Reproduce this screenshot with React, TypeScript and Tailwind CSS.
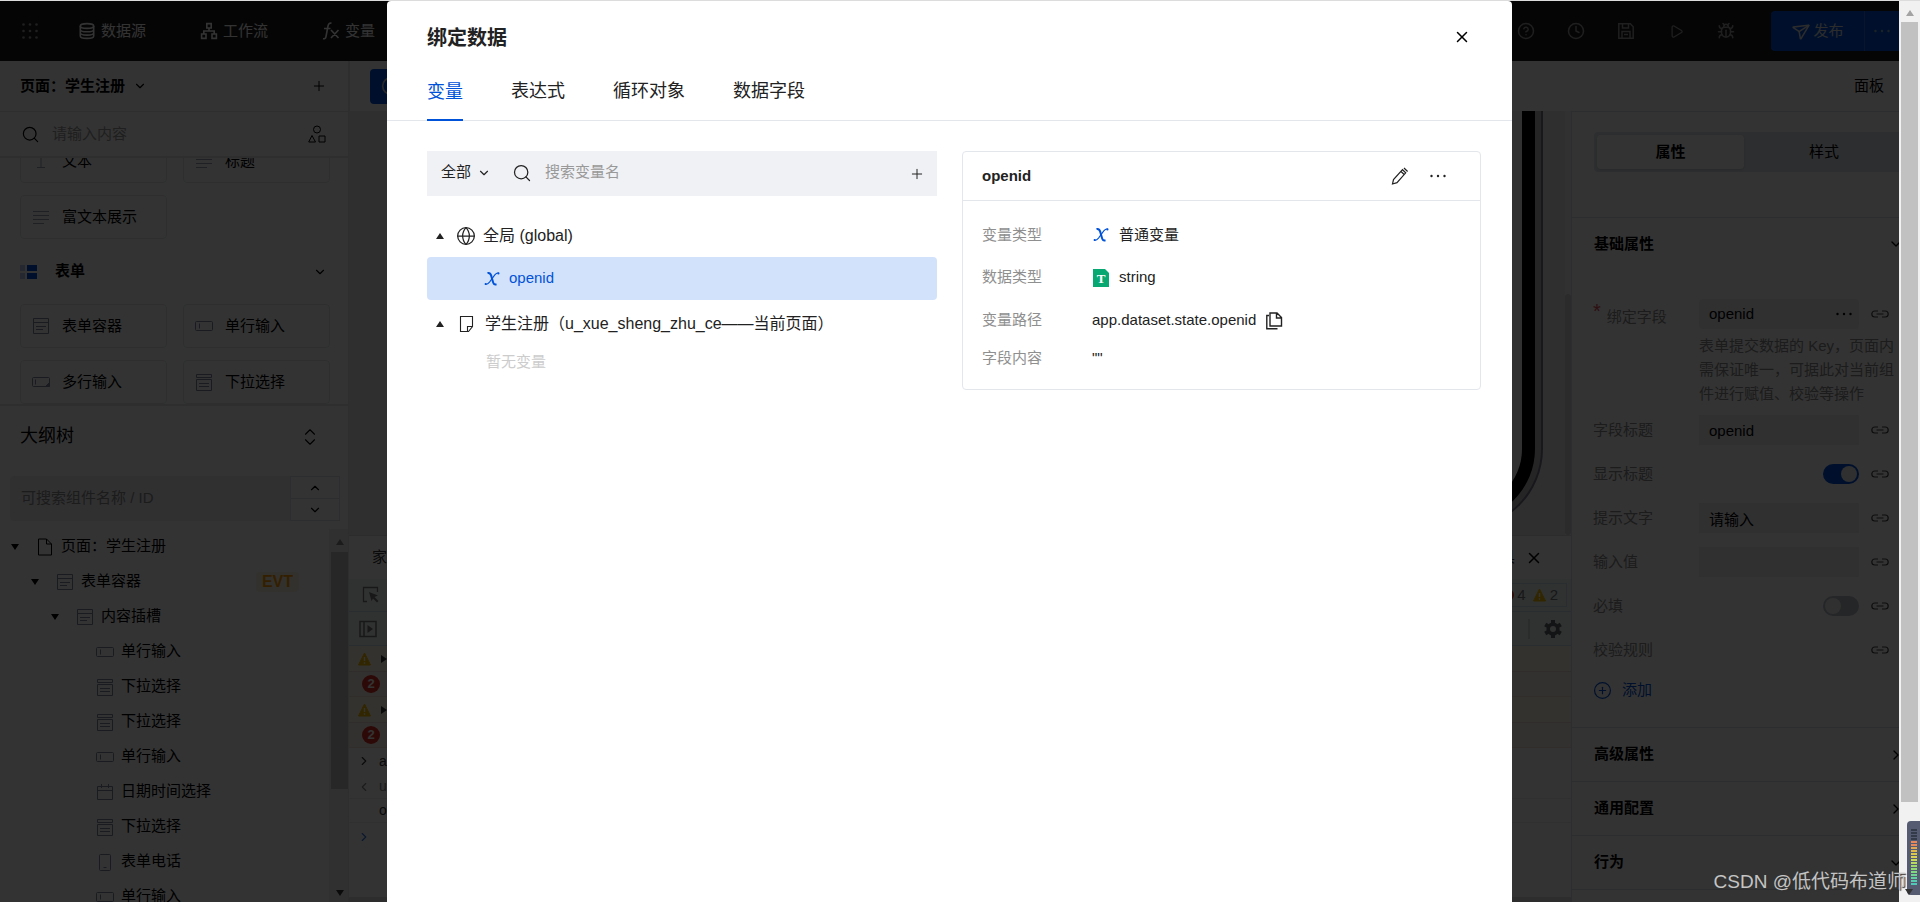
import { useState } from "react";
import type { ReactNode } from "react";
import { Bug, ChevronDown, ChevronRight, ChevronUp, CircleHelp, CirclePlus, Clock, Globe, Play, Plus, Search, Send, X } from "lucide-react";

type IconProps = { className?: string };

type TreeItem = { label: string; icon: (p: IconProps) => ReactNode; indent: string; open?: boolean; event?: boolean };

function Svg({ className = "", size = 18, children }: { className?: string; size?: number; children: ReactNode }) {
  return (
    <svg className={`shrink-0 ${className}`} width={size} height={size} viewBox="0 0 18 18" fill="none" stroke="currentColor" aria-hidden="true">
      {children}
    </svg>
  );
}

function AppsIcon() {
  return (
    <Svg className="text-[#999]">
      {[2.5, 9, 15.5].map((y) =>
        [2.5, 9, 15.5].map((x) => <circle key={`${x}-${y}`} cx={x} cy={y} r="1.3" fill="currentColor" stroke="none" />)
      )}
    </Svg>
  );
}

function DatabaseIcon() {
  return (
    <Svg>
      <ellipse cx="9" cy="4" rx="6.7" ry="2.4" strokeWidth="1.6" />
      <path d="M2.3 4v10c0 1.4 3 2.4 6.7 2.4s6.7-1 6.7-2.4V4M2.3 7.4c0 1.3 3 2.3 6.7 2.3s6.7-1 6.7-2.3M2.3 10.8c0 1.3 3 2.3 6.7 2.3s6.7-1 6.7-2.3" strokeWidth="1.6" />
    </Svg>
  );
}

function FlowIcon() {
  return (
    <Svg>
      <path d="M6.8 1.6h4.4V6H6.8zM1.6 12H6v4.4H1.6zM12 12h4.4v4.4H12zM9 6v3M3.8 12V9h10.4v3" strokeWidth="1.6" />
    </Svg>
  );
}

function FunctionIcon() {
  return (
    <Svg>
      <path d="M9.5 1.3C7.6.7 6.4 1.8 6 4L4 14.5c-.3 1.8-1.3 2.6-3 2.2M2 6.5h6.5M9 8l7.500 8M16.5 8 9 16" strokeWidth="1.6" />
    </Svg>
  );
}

function SaveIcon() {
  return (
    <Svg>
      <path d="M1.8 1.8h11.5l2.9 2.9v11.5H1.8zM5 16V9.5h8V16M5.5 2v4h6V2M7 12.5h4" strokeWidth="1.5" />
    </Svg>
  );
}

function ShapesIcon() {
  return (
    <Svg>
      <circle cx="9" cy="4.5" r="3.5" />
      <path d="M4 10.5 7.5 17H.7zM11 11h6v6h-6z" />
    </Svg>
  );
}

function LinesIcon() {
  return (
    <Svg className="text-[#9aa0b4]">
      <path d="M1 3.5h16M1 7.5h16M1 11.5h16M1 15.5h11" />
    </Svg>
  );
}

function TextIcon() {
  return (
    <Svg className="text-[#9aa0b4]">
      <path d="M3 2.5h12M9 2.5v13M5 15.5h8" />
    </Svg>
  );
}

function ContainerIcon() {
  return (
    <Svg className="text-[#8087a0]">
      <path d="M1.5 1.5h15v15h-15zM1.5 5.5h15M4 9.5h10M4 12.5h7" />
    </Svg>
  );
}

function InputIcon() {
  return (
    <Svg className="text-[#8087a0]">
      <rect x=".5" y="4.5" width="17" height="9" rx="1" />
      <path d="M4.5 6.5v5" />
    </Svg>
  );
}

function TextareaIcon() {
  return (
    <Svg className="text-[#8087a0]">
      <rect x=".5" y="4.5" width="17" height="9" rx="1" />
      <path d="M3.5 6.5v5" />
      <path d="M17.5 9.5v4h-4z" fill="currentColor" />
    </Svg>
  );
}

function SelectIcon() {
  return (
    <Svg className="text-[#8087a0]">
      <path d="M1.5 1.5h15v3h-15zM1.5 6.5h15v11h-15zM4 10.5h10M4 13.5h10" />
    </Svg>
  );
}

function CalendarIcon() {
  return (
    <Svg className="text-[#8087a0]">
      <path d="M1.5 3.5h15v13h-15zM1.5 7.5h15M5.5 1v4M12.5 1v4" />
    </Svg>
  );
}

function PhoneIcon() {
  return (
    <Svg className="text-[#8087a0]">
      <rect x="3.5" y="1.5" width="11" height="16" rx="1" />
      <path d="M7.5 14.5h3" />
    </Svg>
  );
}

function FileIcon() {
  return (
    <Svg>
      <path d="M2.5 1h8l5 5v11h-13zM10.5 1v5h5" />
    </Svg>
  );
}

function PageIcon() {
  return (
    <Svg className="text-[#222]">
      <path d="M3.5 1.5h12v10l-4 5h-8zM10.5 16.5v-5h5" strokeWidth="1.1" />
    </Svg>
  );
}

function FormIcon() {
  return (
    <Svg>
      <path d="M0 2h5v6H0zM0 10h5v6H0z" fill="#b9c9f5" stroke="none" />
      <path d="M7 2h10v6H7zM7 10h10v6H7z" fill="#0052d9" stroke="none" />
    </Svg>
  );
}

function VariableIcon() {
  return (
    <Svg className="text-[#0052d9]">
      <path d="M4.5 3c2.200-.5 3 .4 3.600 2.400l1.900 6.700c.5 1.900 1.400 2.700 3.500 2.100" strokeWidth="2" />
      <path d="M15.800 3.200c-1.500-.7-2.700.1-4 1.700l-5.300 7.200c-1.400 1.800-2.600 2.700-4.500 2" strokeWidth="1.1" />
      <circle cx="15.4" cy="3.4" r="1.1" fill="currentColor" stroke="none" />
      <circle cx="2.7" cy="14" r="1.1" fill="currentColor" stroke="none" />
    </Svg>
  );
}

function StringIcon() {
  return (
    <Svg>
      <path d="M1 0h12l4 4v14H1z" fill="#07a872" stroke="none" />
      <text x="9" y="14" textAnchor="middle" fill="#fff" stroke="none" className="font-['Liberation_Serif',serif] text-[13px] font-bold">
        T
      </text>
    </Svg>
  );
}

function PencilIcon() {
  return (
    <Svg>
      <path d="M1.5 17 2.500 12.500 11.500 2.700l3.200 3.100L6 15.700zM10 4.500l3.200 3M13 1l3.600 3.500" strokeWidth="1.2" />
    </Svg>
  );
}

function CopyIcon() {
  return (
    <Svg>
      <path d="M5 1h7l4.5 4.5V14H5zM11.500 1v5h5M4 3.5H1.800v13.200H12.500" strokeWidth="1.4" />
    </Svg>
  );
}

function LinkIcon() {
  return (
    <Svg className="text-[#444]">
      <path d="M7 6H3.800a3 3 0 0 0 0 6H7M11 6h3.200a3 3 0 0 1 0 6H11M5.5 9h7" strokeWidth="1.2" />
    </Svg>
  );
}

function DotsIcon({ className = "" }: IconProps) {
  return (
    <Svg className={className}>
      {[2.5, 9, 15.5].map((x) => (
        <circle key={x} cx={x} cy="9" r="1.2" fill="currentColor" stroke="none" />
      ))}
    </Svg>
  );
}

function Triangle({ className = "" }: IconProps) {
  return (
    <svg className={`shrink-0 ${className}`} width="8" height="6" viewBox="0 0 8 6" fill="currentColor" aria-hidden="true">
      <path d="M0 0h8L4 6z" />
    </svg>
  );
}

function WarnIcon() {
  return (
    <svg className="shrink-0" width="13" height="14" viewBox="0 0 13 14" aria-hidden="true">
      <path d="M6.5 1 12.500 13H.5z" fill="#f5bd00" stroke="#f5bd00" strokeLinejoin="round" />
      <path d="M6.5 5v4M6.5 10.300v1.400" stroke="#fff" strokeWidth="1.4" />
    </svg>
  );
}

function GearIcon() {
  return (
    <Svg className="text-[#5f6368]">
      <circle cx="9" cy="9" r="4.8" strokeWidth="3.6" />
      <path d="M9 0v3M9 15v3M1.200 4.500l2.600 1.500M14.200 12l2.600 1.500M1.200 13.500 3.800 12M14.200 6l2.600-1.500" strokeWidth="4" />
    </Svg>
  );
}

const palette = [
  { label: "文本", icon: TextIcon },
  { label: "标题", icon: LinesIcon },
  { label: "富文本展示", icon: LinesIcon },
];

const formPalette = [
  { label: "表单容器", icon: ContainerIcon },
  { label: "单行输入", icon: InputIcon },
  { label: "多行输入", icon: TextareaIcon },
  { label: "下拉选择", icon: SelectIcon },
];

const outline: TreeItem[] = [
  { label: "页面：学生注册", icon: FileIcon, indent: "pl-[11px]", open: true },
  { label: "表单容器", icon: ContainerIcon, indent: "pl-[31px]", open: true, event: true },
  { label: "内容插槽", icon: ContainerIcon, indent: "pl-[51px]", open: true },
  { label: "单行输入", icon: InputIcon, indent: "pl-24" },
  { label: "下拉选择", icon: SelectIcon, indent: "pl-24" },
  { label: "下拉选择", icon: SelectIcon, indent: "pl-24" },
  { label: "单行输入", icon: InputIcon, indent: "pl-24" },
  { label: "日期时间选择", icon: CalendarIcon, indent: "pl-24" },
  { label: "下拉选择", icon: SelectIcon, indent: "pl-24" },
  { label: "表单电话", icon: PhoneIcon, indent: "pl-24" },
  { label: "单行输入", icon: InputIcon, indent: "pl-24" },
];

function Header() {
  return (
    <header className="flex h-15 shrink-0 items-center bg-[#1a1a1a] pl-[21px] text-white">
      <button type="button" aria-label="应用">
        <AppsIcon />
      </button>
      <nav className="ml-[39px] flex gap-[54px]">
        <a href="#data" className="flex items-center gap-[5px]">
          <DatabaseIcon />
          数据源
        </a>
        <a href="#flow" className="flex items-center gap-[5px]">
          <FlowIcon />
          工作流
        </a>
        <a href="#vars" className="flex items-center gap-[5px]">
          <FunctionIcon />
          变量
        </a>
      </nav>
      <div className="ml-auto flex items-center gap-8 pr-9 text-[#999]">
        <button type="button" aria-label="帮助"><CircleHelp size={18} /></button>
        <button type="button" aria-label="历史"><Clock size={18} /></button>
        <button type="button" aria-label="保存"><SaveIcon /></button>
        <button type="button" aria-label="预览" className="flex w-[18px] justify-center"><Play size={15} /></button>
        <button type="button" aria-label="调试"><Bug size={18} /></button>
      </div>
      <div className="flex h-10 w-32 overflow-hidden rounded-l bg-[#0052d9]">
        <button type="button" className="flex w-[94px] items-center justify-center gap-1 border-r border-[#2a6ce0] text-[#ddd]">
          <Send size={18} className="rotate-12" />
          发布
        </button>
        <button type="button" aria-label="更多" className="flex flex-1 items-center justify-center">
          <DotsIcon className="text-[#8ab]" />
        </button>
      </div>
    </header>
  );
}

function PaletteGrid({ items }: { items: { label: string; icon: (p: IconProps) => ReactNode }[] }) {
  return (
    <div className="grid grid-cols-2 gap-x-4 gap-y-3">
      {items.map(({ label, icon: Icon }) => (
        <button key={label} type="button" className="flex h-11 items-center gap-3 rounded border border-[#e3e6eb] pl-[11px]">
          <Icon />
          {label}
        </button>
      ))}
    </div>
  );
}

function ComponentPanel() {
  return (
    <section className="h-[345px] shrink-0 border-b-2 border-[#e3e6eb]">
      <div className="flex h-[51px] items-center border-b border-[#e3e6eb] pr-[21px] pl-5">
        <button type="button" className="flex items-center gap-2 font-bold">
          页面：学生注册
          <ChevronDown size={14} />
        </button>
        <button type="button" aria-label="新建页面" className="ml-auto">
          <Plus size={16} strokeWidth={1.5} />
        </button>
      </div>
      <div className="flex h-[46px] items-center border-b-2 border-[#e3e6eb] pr-[22px] pl-[21px]">
        <Search size={19} strokeWidth={1.5} />
        <input aria-label="搜索组件" placeholder="请输入内容" className="ml-3 min-w-0 flex-1 outline-none placeholder:text-[#9a9a9a]" />
        <ShapesIcon />
      </div>
      <div className="h-[246px] overflow-hidden pr-[18px] pl-5">
        <div className="-mt-[19px]">
          <PaletteGrid items={palette} />
        </div>
        <button type="button" className="flex h-[65px] w-full items-center pr-[3px] font-bold">
          <FormIcon />
          <span className="ml-[17px]">表单</span>
          <ChevronDown size={14} className="ml-auto" />
        </button>
        <PaletteGrid items={formPalette} />
      </div>
    </section>
  );
}

function OutlinePanel() {
  return (
    <section className="flex min-h-0 flex-1 flex-col">
      <div className="flex h-[61px] shrink-0 items-center pr-[29px] pl-5">
        <h2 className="text-[18px]">大纲树</h2>
        <button type="button" aria-label="折叠" className="ml-auto flex flex-col">
          <ChevronUp size={18} strokeWidth={1.5} className="-mb-2" />
          <ChevronDown size={18} strokeWidth={1.5} />
        </button>
      </div>
      <div className="mt-[9px] mr-2 ml-2.5 flex h-[45px] shrink-0">
        <input
          aria-label="搜索组件名称"
          placeholder="可搜索组件名称 / ID"
          className="min-w-0 flex-1 rounded-l bg-[#eeeff2] pl-[11px] outline-none placeholder:text-[#8a8a8a]"
        />
        <div className="flex w-[50px] flex-col divide-y divide-[#dde0e6] border border-[#dde0e6]">
          <button type="button" aria-label="上一个" className="flex flex-1 items-center justify-center"><ChevronUp size={14} /></button>
          <button type="button" aria-label="下一个" className="flex flex-1 items-center justify-center"><ChevronDown size={14} /></button>
        </div>
      </div>
      <div className="mt-2 flex min-h-0 flex-1">
        <ul className="min-w-0 flex-1 overflow-hidden">
          {outline.map(({ label, icon: Icon, indent, open, event }, i) => (
            <li key={i} className={`flex h-[35px] items-center ${indent}`}>
              {open && <Triangle className="mr-[17px]" />}
              <Icon />
              <span className="ml-[7px]">{label}</span>
              {event && <span className="mr-[30px] ml-auto rounded bg-[#fff3e6] px-1.5 text-[16px] leading-5 font-bold text-[#ff9c00]">EVT</span>}
            </li>
          ))}
        </ul>
        <div className="flex w-[19px] flex-col items-center bg-[#f1f1f1] pt-[10px] pb-[6px] pl-0.5" aria-hidden="true">
          <Triangle className="rotate-180 text-[#888]" />
          <div className="mt-[7px] h-[237px] w-full bg-[#c1c1c1]" />
          <Triangle className="mt-auto text-[#333]" />
        </div>
      </div>
    </section>
  );
}

function Canvas() {
  return (
    <div className="flex h-[424px] shrink-0 justify-end overflow-hidden bg-[#ebebeb]">
      <div className="mr-[22px] h-[418px] w-[460px] rounded-br-[80px] border-r-2 border-b-2 border-[#77778a] bg-[#bbb] pr-1.5 pb-1.5">
        <div className="h-full rounded-br-[72px] border-r-[13px] border-b-[13px] border-black bg-[#f6f6f8]" />
      </div>
      <div className="flex w-[6px] flex-col bg-[#f6f6f6] pt-[183px]">
        <div className="flex-1 rounded-full bg-[#d4d4d4]" />
      </div>
    </div>
  );
}

function ConsoleRow({ className, children }: { className: string; children?: ReactNode }) {
  return <div className={`flex shrink-0 items-center border-b ${className}`}>{children}</div>;
}

function DevTools() {
  return (
    <div className="flex min-h-0 flex-1 flex-col overflow-hidden border-t border-[#dadce0] bg-white text-[#333]">
      <div className="flex h-[43px] shrink-0 items-center justify-between pr-7 pl-[23px]">
        <span>家校通</span>
        <span className="flex items-center gap-2.5">
          开发工具
          <button type="button" aria-label="关闭" className="text-black"><X size={18} /></button>
        </span>
      </div>
      <div className="flex h-[33px] shrink-0 items-center justify-between border-b border-[#cfe0e8] bg-[#f1f6f6] pr-1 pl-[13px] text-[#777]">
        <Svg>
          <path d="M5 15.5H1.500v-14h14V6" strokeWidth="1.3" />
          <path d="m7 6 9 3.500-3.500 1.500 4 4-1.500 1.500-4-4L9.500 15z" fill="currentColor" stroke="none" />
        </Svg>
        <span className="flex h-6 items-center border border-[#cfe0e8] px-2">
          <span className="mr-[3px] size-3 rounded-full bg-[#e03c31]" />4
          <span className="mr-1 ml-[7px]"><WarnIcon /></span>2
        </span>
      </div>
      <div className="flex h-[34px] shrink-0 items-center justify-between border-b border-[#cfe0e8] bg-[#f1f6f6] pr-[9px] pl-[10px] text-[#777]">
        <Svg>
          <path d="M1 1.500h16v15H1zM5 2v14" strokeWidth="1.5" />
          <path d="m8.500 5 5.500 4-5.500 4z" fill="currentColor" stroke="none" />
        </Svg>
        <span className="flex items-center gap-3.5">
          <span className="h-5 w-0.5 bg-[#cfd4d8]" />
          <GearIcon />
        </span>
      </div>
      {[0, 1].map((n) => (
        <div key={n} className="shrink-0">
          <ConsoleRow className="h-[26px] gap-[9px] border-[#f5dada] bg-[#fff8e8] pl-[9px]">
            <WarnIcon />
            <Triangle className="-rotate-90" />
          </ConsoleRow>
          <ConsoleRow className="h-[25px] border-[#f5e0d8] bg-[#fbf3ec] pl-[13px]">
            <span className="size-[18px] rounded-full bg-[#d93025] text-center text-[13px] leading-[18px] font-bold text-white">2</span>
          </ConsoleRow>
        </div>
      ))}
      <ConsoleRow className="h-[27px] gap-2 border-transparent pl-2 text-[14px]"><ChevronRight size={14} />app</ConsoleRow>
      <ConsoleRow className="h-6 gap-2 border-[#eee] pl-2 text-[14px] text-[#888]"><ChevronRight size={14} className="rotate-180" />undefined</ConsoleRow>
      <ConsoleRow className="h-6 border-[#eee] pl-[30px] text-[14px]">openid</ConsoleRow>
      <ConsoleRow className="h-7 border-transparent pl-2 text-[#3a7be0]"><ChevronRight size={14} /></ConsoleRow>
      <div className="mt-auto h-[5px] shrink-0 bg-[#dfdfdf]" />
    </div>
  );
}

function Field({ id, label, children }: { id: string; label: string; children?: ReactNode }) {
  return (
    <div className="flex h-11 items-center">
      <label htmlFor={id} className="w-[106px] shrink-0 text-[#8a8a8a]">{label}</label>
      <div className="flex w-40 shrink-0 justify-end">{children}</div>
      <button type="button" aria-label={`${label} 绑定数据`} className="ml-3"><LinkIcon /></button>
    </div>
  );
}

function Toggle({ id, on }: { id: string; on: boolean }) {
  const [checked, setChecked] = useState(on);
  return (
    <span className="relative flex">
      <input
        id={id}
        type="checkbox"
        role="switch"
        checked={checked}
        onChange={(e) => setChecked(e.target.checked)}
        className="peer h-5 w-9 appearance-none rounded-full bg-[#b8bcc8] checked:bg-[#0052d9]"
      />
      <span className="pointer-events-none absolute top-0.5 left-0.5 size-4 rounded-full bg-[#eee] peer-checked:left-[18px]" />
    </span>
  );
}

function PropertyPanel() {
  return (
    <aside className="w-[328px] shrink-0 overflow-hidden border-t border-l border-[#dde0e6]">
      <div className="w-[344px]">
        <div className="h-[106px] border-b border-[#dde0e6] pt-5 pl-[22px]">
          <div className="flex h-10 rounded-l bg-[#e0e4ea] p-[3px]">
            <button type="button" className="w-[147px] rounded bg-white font-bold shadow">属性</button>
            <button type="button" className="w-40">样式</button>
          </div>
        </div>
        <button type="button" className="flex h-[52px] w-full items-center pr-3 pl-[22px] font-bold">
          基础属性
          <ChevronDown size={16} className="ml-auto" />
        </button>
        <div className="h-[458px] border-b border-[#dde0e6] pt-[22px] pl-[21px]">
          <div className="flex h-11 items-center">
            <label htmlFor="bindField" className="flex w-[106px] shrink-0 items-center gap-1.5 pt-1.5 text-[#8a8a8a]">
              <span className="mb-3 text-[20px] leading-none text-[#e34d59]">*</span>
              绑定字段
            </label>
            <div className="flex h-[30px] w-40 shrink-0 items-center rounded bg-[#eeeff2] px-2.5">
              <input id="bindField" defaultValue="openid" className="min-w-0 flex-1 outline-none" />
              <button type="button" aria-label="更多" className="-mr-1"><DotsIcon /></button>
            </div>
            <button type="button" aria-label="绑定字段 绑定数据" className="ml-3"><LinkIcon /></button>
          </div>
          <p className="-mt-0.5 mb-0.5 ml-[106px] w-[202px] leading-6 text-[#8a8a8a]">
            表单提交数据的 Key，页面内需保证唯一，可据此对当前组件进行赋值、校验等操作
          </p>
          <Field id="fieldTitle" label="字段标题">
            <input id="fieldTitle" defaultValue="openid" className="h-[30px] w-full bg-[#eeeff2] px-2.5" />
          </Field>
          <Field id="showTitle" label="显示标题"><Toggle id="showTitle" on /></Field>
          <Field id="hint" label="提示文字">
            <input id="hint" defaultValue="请输入" className="h-[30px] w-full bg-[#eeeff2] px-2.5" />
          </Field>
          <Field id="value" label="输入值">
            <input id="value" className="h-[30px] w-full bg-[#eeeff2] px-2.5" />
          </Field>
          <Field id="required" label="必填"><Toggle id="required" on={false} /></Field>
          <Field id="rules" label="校验规则" />
          <button type="button" id="rules" className="mt-0.5 flex h-8 items-center gap-2.5 text-[#0052d9]">
            <CirclePlus size={19} strokeWidth={1.5} />
            添加
          </button>
        </div>
        {["高级属性", "通用配置", "行为"].map((name) => (
          <button key={name} type="button" className="flex h-[54px] w-full items-center border-b border-[#dde0e6] pr-3 pl-[22px] font-bold">
            {name}
            {name === "行为" ? <ChevronDown size={16} className="ml-auto" /> : <ChevronRight size={16} className="ml-auto" />}
          </button>
        ))}
      </div>
    </aside>
  );
}

function DetailRow({ label, className, children }: { label: string; className: string; children: ReactNode }) {
  return (
    <div className={`flex items-center ${className}`}>
      <dt className="w-[110px] shrink-0 text-[#8f8f8f]">{label}</dt>
      <dd className="flex items-center gap-[9px]">{children}</dd>
    </div>
  );
}

const tabs = ["变量", "表达式", "循环对象", "数据字段"];

function BindDataDialog() {
  const [tab, setTab] = useState(tabs[0]);

  return (
    <div role="dialog" aria-modal="true" aria-labelledby="dialogTitle" className="w-[1125px] max-w-full rounded-t bg-white text-[#222]">
      <div className="flex h-[72px] items-center justify-between pr-[41px] pl-10">
        <h1 id="dialogTitle" className="pt-0.5 text-[20px] font-bold">绑定数据</h1>
        <button type="button" aria-label="关闭" className="text-black"><X size={18} /></button>
      </div>
      <div role="tablist" className="flex h-12 gap-12 border-b border-[#e3e6eb] pl-10 text-[18px]">
        {tabs.map((name) => (
          <button
            key={name}
            type="button"
            role="tab"
            aria-selected={tab === name}
            onClick={() => setTab(name)}
            className={tab === name ? "-mb-px border-b-2 border-[#0052d9] pb-2 text-[#0052d9]" : "pb-2.5"}
          >
            {name}
          </button>
        ))}
      </div>
      <div className="flex items-start gap-[25px] pt-[30px] pr-[31px] pl-10">
        <div className="w-[510px] shrink-0">
          <div className="flex h-[45px] items-center bg-[#f0f1f5] pr-3 pb-0.5 pl-3.5">
            <span className="relative flex items-center">
              <select aria-label="变量范围" className="w-[50px] appearance-none outline-none">
                <option>全部</option>
              </select>
              <ChevronDown size={14} className="pointer-events-none absolute right-0" />
            </span>
            <Search size={20} strokeWidth={1.5} className="ml-[21px]" />
            <input aria-label="搜索变量名" placeholder="搜索变量名" className="ml-[13px] min-w-0 flex-1 outline-none placeholder:text-[#999]" />
            <button type="button" aria-label="新建变量" className="pt-0.5"><Plus size={16} strokeWidth={1.5} /></button>
          </div>
          <ul className="pt-[18px]">
            <li className="flex h-[43px] items-center pl-[9px] text-[16px]">
              <Triangle className="rotate-180" />
              <Globe size={20} strokeWidth={1.5} className="ml-3" />
              <span className="ml-[7px]">全局 (global)</span>
            </li>
            <li className="flex h-[43px] items-center gap-2 rounded bg-[#d3e2fb] pl-14 text-[#0052d9]">
              <VariableIcon />
              openid
            </li>
            <li className="mt-[2px] flex h-[43px] items-center pl-[9px] text-[16px]">
              <Triangle className="rotate-180" />
              <span className="ml-[13px]"><PageIcon /></span>
              <span className="ml-2.5">学生注册（u_xue_sheng_zhu_ce——当前页面）</span>
            </li>
            <li className="flex h-[34px] items-center pl-[59px] text-[#ccc]">暂无变量</li>
          </ul>
        </div>
        <section className="min-w-0 flex-1 rounded border border-[#e3e6eb]">
          <div className="flex h-[49px] items-center border-b border-[#e3e6eb] pr-[33px] pl-[19px]">
            <h2 className="font-bold">openid</h2>
            <button type="button" aria-label="编辑" className="ml-auto"><PencilIcon /></button>
            <button type="button" aria-label="更多" className="ml-5"><DotsIcon /></button>
          </div>
          <dl className="pt-[13px] pb-3.5 pl-[19px]">
            <DetailRow label="变量类型" className="h-[42px]"><VariableIcon />普通变量</DetailRow>
            <DetailRow label="数据类型" className="h-[43px]"><StringIcon />string</DetailRow>
            <DetailRow label="变量路径" className="h-[43px]">
              app.dataset.state.openid
              <button type="button" aria-label="复制"><CopyIcon /></button>
            </DetailRow>
            <DetailRow label="字段内容" className="h-[33px]">""</DetailRow>
          </dl>
        </section>
      </div>
    </div>
  );
}

const meter = [
  "bg-[#333a48]", "bg-[#333a48]", "bg-[#333a48]", "bg-[#333a48]", "bg-[#e8875a]", "bg-[#e8875a]", "bg-[#e0a850]",
  "bg-[#e0b84a]", "bg-[#dcc84a]", "bg-[#dcd050]", "bg-[#c8d858]", "bg-[#b8d860]", "bg-[#a0d868]", "bg-[#90d870]",
  "bg-[#80d880]", "bg-[#70d490]", "bg-[#60d0a0]", "bg-[#58ccb0]", "bg-[#50c8b8]",
];

function PageScrollbar() {
  return (
    <div className="relative flex w-[21px] shrink-0 flex-col items-center bg-[#f1f1f1] pt-[9px]" aria-hidden="true">
      <Triangle className="rotate-180 text-[#a3a3a3]" />
      <div className="mt-[6px] h-[780px] w-[17px] bg-[#c1c1c1]" />
      <div className="absolute right-0 bottom-[7px] flex h-[74px] w-[13px] flex-col gap-px rounded-l bg-[#555b70] pt-2 pl-1">
        {meter.map((color, i) => (
          <div key={i} className={`h-0.5 w-[6px] ${color}`} />
        ))}
      </div>
      <Triangle className="absolute bottom-[7px] left-1.5 text-[#333]" />
    </div>
  );
}

export default function App() {
  return (
    <div className="relative flex h-screen overflow-hidden border-t border-[#dcdcdc] font-['Liberation_Sans','Noto_Sans_CJK_SC',sans-serif] text-[15px] text-black">
      <div className="relative flex min-w-0 flex-1 flex-col bg-white">
        <Header />
        <div className="flex min-h-0 flex-1">
          <aside className="flex w-[348px] shrink-0 flex-col">
            <ComponentPanel />
            <OutlinePanel />
          </aside>
          <div className="flex min-w-0 flex-1 flex-col">
            <div className="flex h-[50px] shrink-0 items-center border-l-2 border-[#e3e6eb] pr-[15px] pl-5">
              <button type="button" aria-label="编辑" className="flex h-[35px] w-20 items-center rounded bg-[#0052d9] pl-[11px] text-[#ccc]">
                <Clock size={20} />
              </button>
              <button type="button" className="ml-auto">面板</button>
            </div>
            <div className="flex min-h-0 flex-1">
              <main className="flex min-w-0 flex-1 flex-col border-l border-[#e3e6eb]">
                <Canvas />
                <DevTools />
              </main>
              <PropertyPanel />
            </div>
          </div>
        </div>
        <div className="absolute inset-0 flex justify-center bg-black/80">
          <BindDataDialog />
        </div>
      </div>
      <PageScrollbar />
      <div className="absolute right-[14px] bottom-1.5 text-[19px] text-[#c4c4c4] [text-shadow:1px_1px_1px_#333]">CSDN @低代码布道师</div>
    </div>
  );
}
